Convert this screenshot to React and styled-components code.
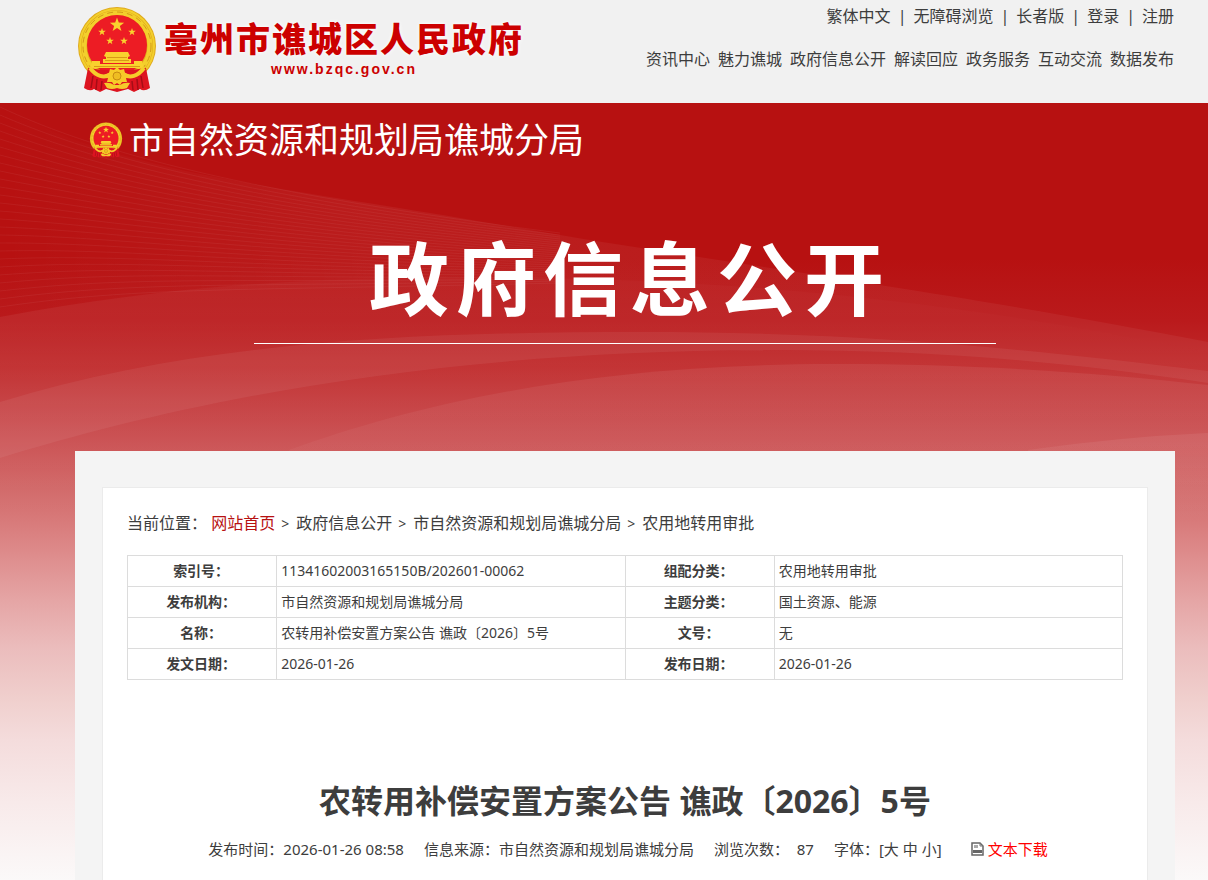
import React from 'react';
import styled, { createGlobalStyle } from 'styled-components';

const GlobalStyle = createGlobalStyle`
  * {
    box-sizing: border-box;
  }
  body {
    margin: 0;
    background: #fff;
    color: #3d3d3d;
    font-family: 'Noto Sans', 'Noto Sans CJK SC', sans-serif;
    font-size: 16px;
  }
  a {
    color: inherit;
    text-decoration: none;
  }
  a:hover {
    color: #b71111;
  }
`;

const TopBar = styled.header`
  display: flex;
  justify-content: space-between;
  height: 103px;
  padding: 0 34px 0 75px;
  background: #f1f1f1;
`;

const Brand = styled.a`
  display: flex;
  align-items: flex-start;
  gap: 7px;
  padding: 6px 0 0 2px;

  &,
  &:hover {
    color: #cc0000;
  }
`;

const BrandText = styled.span`
  display: flex;
  flex-direction: column;
  align-items: center;
  padding-top: 8px;
`;

const BrandName = styled.strong`
  font-family: 'Noto Sans CJK SC', sans-serif;
  font-size: 34px;
  font-weight: 900;
  line-height: 48px;
  letter-spacing: 2px;
  text-shadow: 0 0 4px #fff;
`;

const BrandUrl = styled.span`
  font-family: 'Liberation Sans', sans-serif;
  font-size: 14px;
  font-weight: 700;
  line-height: 14px;
  letter-spacing: 2px;
`;

const TopNav = styled.div`
  display: flex;
  flex-direction: column;
  align-items: flex-end;
  gap: 19px;
  padding-top: 4px;
  line-height: 24px;
  white-space: nowrap;
`;

const ToolLinks = styled.nav`
  display: flex;

  a + a::before {
    content: '|';
    margin: 0 7px;
    color: #3d3d3d;
  }
`;

const MainLinks = styled.nav`
  display: flex;
  gap: 8px;
`;

const Page = styled.div`
  position: relative;
  min-height: calc(100vh - 103px);
  padding: 0 33px 0 75px;
  overflow: hidden;
  background: #fff;
`;

const Waves = styled.svg`
  position: absolute;
  top: 0;
  left: 0;
  width: 100%;
  height: 777px;
`;

const Banner = styled.div`
  position: relative;
  height: 348px;
  color: #fff;
`;

const Department = styled.div`
  display: flex;
  align-items: center;
  gap: 6px;
  height: 74px;
  padding-left: 14px;
  font-size: 35px;
  line-height: 48px;
`;

const BannerTitle = styled.h1`
  width: 742px;
  max-width: 100%;
  height: 167px;
  margin: 0 auto;
  padding: 39px 0 0 10px;
  border-bottom: 1px solid #fff;
  font-family: 'Noto Sans CJK SC', sans-serif;
  font-size: 80px;
  font-weight: 700;
  line-height: 116px;
  letter-spacing: 7px;
  text-align: center;
  white-space: nowrap;
`;

const Main = styled.main`
  position: relative;
  padding: 36px 27px 0;
  background: #f4f4f4;
`;

const Sheet = styled.div`
  min-height: 420px;
  padding: 23px 24px 0;
  border: 1px solid #ebebeb;
  border-bottom: 0;
  background: #fff;
`;

const Crumbs = styled.nav`
  line-height: 24px;

  a + a::before {
    content: '>';
    margin: 0 7px 0 6px;
    color: #3d3d3d;
    font-size: 14px;
  }
`;

const Crumb = styled.a`
  color: ${({ $home }) => ($home ? '#b71111' : 'inherit')};
`;

const InfoTable = styled.table`
  width: 100%;
  margin-top: 19px;
  border-collapse: collapse;
  table-layout: fixed;
  font-size: 14px;
  line-height: 20px;

  th,
  td {
    height: 31px;
    padding: 5px 6px 5px 4px;
    border: 1px solid #dcdcdc;
  }
  th {
    font-weight: 700;
    text-align: center;
  }
  td {
    text-align: left;
  }
`;

const ArticleTitle = styled.h2`
  margin: 96px 0 0;
  font-size: 32px;
  font-weight: 700;
  line-height: 50px;
  text-align: center;
`;

const Meta = styled.div`
  display: flex;
  flex-wrap: wrap;
  justify-content: center;
  gap: 20px;
  margin-top: 12px;
  padding-left: 6px;
  font-size: 15px;
  line-height: 22px;
`;

const SizeButton = styled.button`
  padding: 0;
  border: 0;
  background: none;
  color: inherit;
  font: inherit;
  cursor: pointer;
`;

const Download = styled.a`
  display: inline-flex;
  align-items: center;
  gap: 4px;
  margin-left: 9px;
  color: #ff0000;
`;

const tools = ['繁体中文', '无障碍浏览', '长者版', '登录', '注册'];
const sections = [
  '资讯中心',
  '魅力谯城',
  '政府信息公开',
  '解读回应',
  '政务服务',
  '互动交流',
  '数据发布',
];
const crumbs = ['网站首页', '政府信息公开', '市自然资源和规划局谯城分局', '农用地转用审批'];
const rows = [
  ['索引号：', '11341602003165150B/202601-00062', '组配分类：', '农用地转用审批'],
  ['发布机构：', '市自然资源和规划局谯城分局', '主题分类：', '国土资源、能源'],
  ['名称：', '农转用补偿安置方案公告 谯政〔2026〕5号', '文号：', '无'],
  ['发文日期：', '2026-01-26', '发布日期：', '2026-01-26'],
];

const STAR =
  'M0 -10L2.4 -3.2L9.5 -3.1L3.8 1.2L5.9 8.1L0 4L-5.9 8.1L-3.8 1.2L-9.5 -3.1L-2.4 -3.2Z';

const Emblem = ({ width, height }) => (
  <svg width={width} height={height} viewBox="0 0 80 87" aria-hidden="true">
    <circle cx="40" cy="40" r="39" fill="#dfa91c" />
    <circle cx="40" cy="40" r="37" fill="none" stroke="#f3cf2c" strokeWidth="2" />
    <circle cx="40" cy="40" r="33" fill="none" stroke="#f3cf2c" strokeWidth="5" />
    <circle
      cx="40"
      cy="40"
      r="34"
      fill="none"
      stroke="#d39a18"
      strokeWidth="1"
      strokeDasharray="6 4"
    />
    <circle cx="40" cy="39" r="30" fill="#ed1c24" />
    <g fill="#f9d22e">
      <path d={STAR} transform="translate(40 19) scale(.75)" />
      <path d={STAR} transform="translate(25 26) scale(.4)" />
      <path d={STAR} transform="translate(55 26) scale(.4)" />
      <path d={STAR} transform="translate(33 35) scale(.4)" />
      <path d={STAR} transform="translate(47 35) scale(.4)" />
      <path d="M29 46h22l2 4-2 1v2h3v4H26v-4h3v-2l-2-1z" />
      <path d="M15 55h8v3h34v-3h8l2 7H13z" />
    </g>
    <path d="M30 51.500h20M28 54.500h24M17 60.500h46" stroke="#d99a17" />
    <path
      d="M11 62q29 5 58 0l4 20q-6 4-10 1l-6 3-6-3-11 3-11-3-6 3-6-3q-4 3-10-1z"
      fill="#dd1420"
    />
    <path
      d="M13 62C19 70 27 73 34 68l6-2 6 2c7 5 15 2 21-6"
      fill="none"
      stroke="#f5cc2b"
      strokeWidth="4"
    />
    <path
      d="M40 61l3 3 4-1 1 4 4 2-3 3 1 4-5 0-2 3-3-2-3 2-2-3-5 0 1-4-3-3 4-2 1-4 4 1z"
      fill="#f7cb28"
    />
    <circle cx="40" cy="70" r="4" fill="#efbd22" stroke="#c98b12" />
    <path d="M27 77q6-1 10 2h6q4-3 10-2l-3 5q-5 2-10 0-5 2-10 0z" fill="#f5cc2b" />
    <path
      d="M16 70l-2 12M20 73l-1 11M25 75l-1 9M55 75l1 9M60 73l1 11M64 70l2 12"
      stroke="#a50d16"
      strokeWidth="1.500"
    />
  </svg>
);

const PageIcon = () => (
  <svg width="13" height="14" viewBox="0 0 13 14" aria-hidden="true">
    <path d="M1 1h8l3 3v9H1z" fill="#fff" stroke="#666" strokeWidth="1.500" />
    <path d="M9 1v3h3" fill="none" stroke="#777" />
    <path d="M3 3h4v3H3z" fill="#aaa" />
    <path d="M2 8h9v3H2z" fill="#666" />
  </svg>
);

// fine lines fanning out from the left edge of the banner
const ribs = Array.from({ length: 26 }, (_, i) => {
  const y = 4 + i * 8;
  return `M0 ${y}C${90 + i * 2} ${y + 42 - i * 2.500} ${230} ${88 + i * 4} 560 ${130 + i * 2}`;
});

const Backdrop = () => (
  <Waves viewBox="0 0 1208 777" preserveAspectRatio="none" aria-hidden="true">
    <defs>
      <linearGradient id="base" x1="0" y1="0" x2="0" y2="1">
        <stop offset="0" stopColor="#b71111" />
        <stop offset=".2" stopColor="#b71111" />
        <stop offset=".28" stopColor="#ba1a1c" />
        <stop offset=".34" stopColor="#c02b2c" />
        <stop offset=".4" stopColor="#c64244" />
        <stop offset=".44" stopColor="#cb5254" />
        <stop offset=".49" stopColor="#d16767" />
        <stop offset=".56" stopColor="#db8383" />
        <stop offset=".64" stopColor="#e5a5a5" />
        <stop offset=".7" stopColor="#ebbcbc" />
        <stop offset=".77" stopColor="#f0d0ce" />
        <stop offset=".82" stopColor="#f4dcdc" />
        <stop offset=".9" stopColor="#f8eaea" />
        <stop offset="1" stopColor="#fbf9f9" />
      </linearGradient>
      <linearGradient id="sheet" x1="0" y1="0" x2="1" y2="0">
        <stop offset="0" stopColor="#fff" stopOpacity="0" />
        <stop offset=".3" stopColor="#fff" stopOpacity=".05" />
        <stop offset="1" stopColor="#fff" stopOpacity=".05" />
      </linearGradient>
      <linearGradient id="veil" x1="0" y1="0" x2="0" y2="1">
        <stop offset="0" stopColor="#fff" stopOpacity=".07" />
        <stop offset="1" stopColor="#fff" stopOpacity="0" />
      </linearGradient>
    </defs>
    <rect width="1208" height="777" fill="url(#base)" />
    <path
      d="M0 4C130 72 270 82 501 122S900 180 1208 239V249C940 195 700 172 447 175C270 175 140 188 0 214Z"
      fill="url(#sheet)"
    />
    <g fill="none" stroke="#fff" strokeOpacity=".05">
      {ribs.map((d) => (
        <path key={d} d={d} />
      ))}
    </g>
    <path
      d="M0 214C140 188 270 175 447 175C700 172 940 195 1208 249V420H0Z"
      fill="url(#veil)"
    />
    <path
      d="M0 299C190 240 400 229 640 229C860 229 1020 245 1208 268V280C1060 258 930 247 777 247C430 247 180 300 0 355Z"
      fill="#fff"
      fillOpacity=".06"
    />
    <path
      d="M289 347C420 300 590 261 835 261C980 261 1100 270 1208 282V420H289Z"
      fill="url(#veil)"
    />
    <path d="M1028 347Q1120 334 1208 330V420H1028Z" fill="url(#veil)" />
  </Waves>
);

const App = () => {
  return (
    <>
      <GlobalStyle />
      <TopBar>
        <Brand href="#">
          <Emblem width={80} height={87} />
          <BrandText>
            <BrandName>亳州市谯城区人民政府</BrandName>
            <BrandUrl>www.bzqc.gov.cn</BrandUrl>
          </BrandText>
        </Brand>
        <TopNav>
          <ToolLinks>
            {tools.map((name) => (
              <a key={name} href="#">
                {name}
              </a>
            ))}
          </ToolLinks>
          <MainLinks>
            {sections.map((name) => (
              <a key={name} href="#">
                {name}
              </a>
            ))}
          </MainLinks>
        </TopNav>
      </TopBar>
      <Page>
        <Backdrop />
        <Banner>
          <Department>
            <Emblem width={34} height={36} />
            <span>市自然资源和规划局谯城分局</span>
          </Department>
          <BannerTitle>政府信息公开</BannerTitle>
        </Banner>
        <Main>
          <Sheet>
            <Crumbs>
              当前位置：{' '}
              {crumbs.map((name, i) => (
                <Crumb key={name} href="#" $home={i === 0}>
                  {name}
                </Crumb>
              ))}
            </Crumbs>
            <InfoTable>
              <colgroup>
                <col width="15%" />
                <col width="35%" />
                <col width="15%" />
                <col width="35%" />
              </colgroup>
              <tbody>
                {rows.map((row) => (
                  <tr key={row[0]}>
                    <th scope="row">{row[0]}</th>
                    <td>{row[1]}</td>
                    <th scope="row">{row[2]}</th>
                    <td>{row[3]}</td>
                  </tr>
                ))}
              </tbody>
            </InfoTable>
            <ArticleTitle>农转用补偿安置方案公告 谯政〔2026〕5号</ArticleTitle>
            <Meta>
              <span>发布时间：2026-01-26 08:58</span>
              <span>信息来源：市自然资源和规划局谯城分局</span>
              <span>浏览次数：&nbsp; 87</span>
              <span>
                字体：[<SizeButton>大</SizeButton> <SizeButton>中</SizeButton>{' '}
                <SizeButton>小</SizeButton>]
              </span>
              <Download href="#">
                <PageIcon />
                文本下载
              </Download>
            </Meta>
          </Sheet>
        </Main>
      </Page>
    </>
  );
};

export default App;
